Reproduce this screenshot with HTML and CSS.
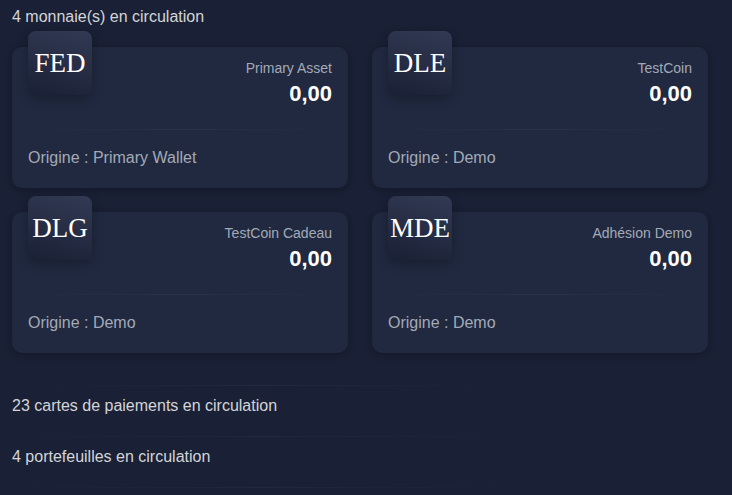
FILE: index.html
```html
<!DOCTYPE html>
<html lang="fr">
<head>
<meta charset="utf-8">
<title>Monnaies</title>
<link rel="stylesheet" href="styles.css">
</head>
<body>
<main class="page">
  <p class="section-title">4 monnaie(s) en circulation</p>
  <div class="cards">
    <div class="card">
      <div class="card-icon">FED</div>
      <div class="card-header">
        <p class="card-label">Primary Asset</p>
        <p class="card-value">0,00</p>
      </div>
      <hr class="fade-line">
      <div class="card-footer">Origine : Primary Wallet</div>
    </div>
    <div class="card">
      <div class="card-icon">DLE</div>
      <div class="card-header">
        <p class="card-label">TestCoin</p>
        <p class="card-value">0,00</p>
      </div>
      <hr class="fade-line">
      <div class="card-footer">Origine : Demo</div>
    </div>
    <div class="card">
      <div class="card-icon">DLG</div>
      <div class="card-header">
        <p class="card-label">TestCoin Cadeau</p>
        <p class="card-value">0,00</p>
      </div>
      <hr class="fade-line">
      <div class="card-footer">Origine : Demo</div>
    </div>
    <div class="card">
      <div class="card-icon">MDE</div>
      <div class="card-header">
        <p class="card-label">Adhésion Demo</p>
        <p class="card-value">0,00</p>
      </div>
      <hr class="fade-line">
      <div class="card-footer">Origine : Demo</div>
    </div>
  </div>
  <div class="stats">
    <hr class="fade-line wide">
    <p class="stat">23 cartes de paiements en circulation</p>
    <hr class="fade-line wide">
    <p class="stat">4 portefeuilles en circulation</p>
    <hr class="fade-line wide">
  </div>
</main>
</body>
</html>
```
FILE: styles.css
```css
html, body {
  margin: 0;
  padding: 0;
  background: #1a2035;
  height: 100%;
  overflow: hidden;
}
body {
  font-family: "Liberation Sans", Arial, sans-serif;
  color: #fff;
}
.page {
  padding: 5px 12px 0 12px;
}
.section-title {
  margin: 0 0 18px 0;
  font-size: 16px;
  line-height: 24px;
  color: rgba(255, 255, 255, 0.82);
}
.cards {
  display: grid;
  grid-template-columns: 336px 336px;
  column-gap: 24px;
  row-gap: 24px;
}
.card {
  position: relative;
  background: #202940;
  border-radius: 10px;
  box-shadow: 0 2px 6px rgba(0, 0, 0, 0.25);
  height: 141px;
  display: flex;
  flex-direction: column;
}
.card-icon {
  position: absolute;
  top: -16px;
  left: 16px;
  width: 64px;
  height: 64px;
  border-radius: 8px;
  background: linear-gradient(195deg, #323a54 0%, #1a2035 100%);
  box-shadow: 0 4px 12px rgba(0, 0, 0, 0.25);
  display: flex;
  align-items: center;
  justify-content: center;
  font-family: "Liberation Serif", "Times New Roman", serif;
  font-size: 27px;
  color: #fff;
}
.card-header {
  padding: 11px 16px 8px 16px;
  text-align: right;
}
.card-label {
  margin: 0;
  font-size: 14px;
  line-height: 21px;
  color: #a4a9b7;
}
.card-value {
  margin: 0;
  font-size: 22px;
  line-height: 30px;
  font-weight: 700;
  color: #fff;
}
.fade-line {
  border: 0;
  height: 1px;
  margin: 12px 0 0 0;
  background-image: linear-gradient(to right, rgba(255, 255, 255, 0), rgba(255, 255, 255, 0.04), rgba(255, 255, 255, 0));
}
.card-footer {
  padding: 16px 16px 0 16px;
  font-size: 16px;
  line-height: 24px;
  color: #a4a9b7;
}
.stats {
  padding-top: 32px;
}
.fade-line.wide {
  margin: 0;
  width: 500px;
}
.stat {
  margin: 8px 0 18px 0;
  font-size: 16px;
  line-height: 24px;
  color: rgba(255, 255, 255, 0.82);
}
```
